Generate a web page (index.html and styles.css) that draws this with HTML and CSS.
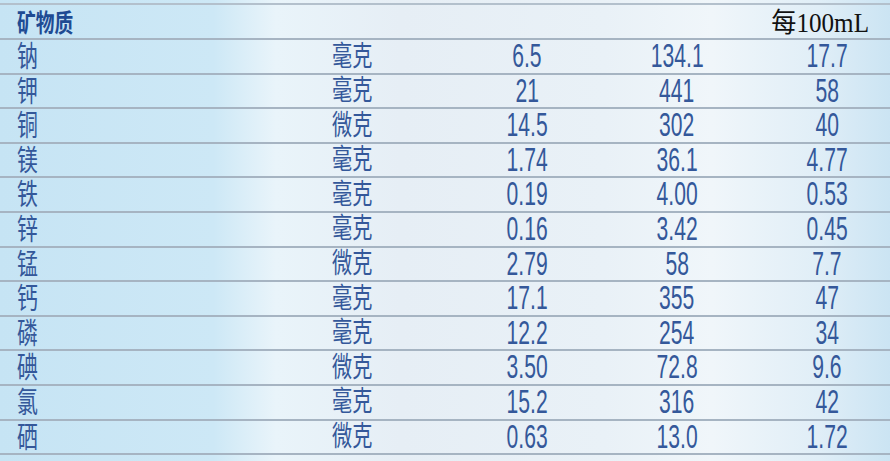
FILE: index.html
```html
<!DOCTYPE html>
<html lang="zh">
<head>
<meta charset="utf-8">
<title>矿物质</title>
<link rel="stylesheet" href="styles.css">
</head>
<body>
<div class="table">
  <div class="row head">
    <div class="name"><span class="title">矿物质</span></div>
    <div class="per"><span class="pertext">每100mL</span></div>
  </div>
  <div class="row"><div class="name"><span class="cn">钠</span></div><div class="unit"><span class="cu">毫克</span></div><div class="num"><span class="n">6.5</span></div><div class="num"><span class="n">134.1</span></div><div class="num last"><span class="n">17.7</span></div></div>
  <div class="row"><div class="name"><span class="cn">钾</span></div><div class="unit"><span class="cu">毫克</span></div><div class="num"><span class="n">21</span></div><div class="num"><span class="n">441</span></div><div class="num last"><span class="n">58</span></div></div>
  <div class="row"><div class="name"><span class="cn">铜</span></div><div class="unit"><span class="cu">微克</span></div><div class="num"><span class="n">14.5</span></div><div class="num"><span class="n">302</span></div><div class="num last"><span class="n">40</span></div></div>
  <div class="row"><div class="name"><span class="cn">镁</span></div><div class="unit"><span class="cu">毫克</span></div><div class="num"><span class="n">1.74</span></div><div class="num"><span class="n">36.1</span></div><div class="num last"><span class="n">4.77</span></div></div>
  <div class="row"><div class="name"><span class="cn">铁</span></div><div class="unit"><span class="cu">毫克</span></div><div class="num"><span class="n">0.19</span></div><div class="num"><span class="n">4.00</span></div><div class="num last"><span class="n">0.53</span></div></div>
  <div class="row"><div class="name"><span class="cn">锌</span></div><div class="unit"><span class="cu">毫克</span></div><div class="num"><span class="n">0.16</span></div><div class="num"><span class="n">3.42</span></div><div class="num last"><span class="n">0.45</span></div></div>
  <div class="row"><div class="name"><span class="cn">锰</span></div><div class="unit"><span class="cu">微克</span></div><div class="num"><span class="n">2.79</span></div><div class="num"><span class="n">58</span></div><div class="num last"><span class="n">7.7</span></div></div>
  <div class="row"><div class="name"><span class="cn">钙</span></div><div class="unit"><span class="cu">毫克</span></div><div class="num"><span class="n">17.1</span></div><div class="num"><span class="n">355</span></div><div class="num last"><span class="n">47</span></div></div>
  <div class="row"><div class="name"><span class="cn">磷</span></div><div class="unit"><span class="cu">毫克</span></div><div class="num"><span class="n">12.2</span></div><div class="num"><span class="n">254</span></div><div class="num last"><span class="n">34</span></div></div>
  <div class="row"><div class="name"><span class="cn">碘</span></div><div class="unit"><span class="cu">微克</span></div><div class="num"><span class="n">3.50</span></div><div class="num"><span class="n">72.8</span></div><div class="num last"><span class="n">9.6</span></div></div>
  <div class="row"><div class="name"><span class="cn">氯</span></div><div class="unit"><span class="cu">毫克</span></div><div class="num"><span class="n">15.2</span></div><div class="num"><span class="n">316</span></div><div class="num last"><span class="n">42</span></div></div>
  <div class="row"><div class="name"><span class="cn">硒</span></div><div class="unit"><span class="cu">微克</span></div><div class="num"><span class="n">0.63</span></div><div class="num"><span class="n">13.0</span></div><div class="num last"><span class="n">1.72</span></div></div>
  <div class="row tail"><div class="name"><span class="title tailtext">其他营养成分</span></div></div>
</div>
</body>
</html>
```
FILE: styles.css
```css
html, body {
  margin: 0;
  padding: 0;
  overflow: hidden;
}
body {
  width: 890px;
  height: 461px;
  background: linear-gradient(to right, #c6e4f4 0%, #cde8f6 24%, #e9f4fa 31%, #e6eef5 45%, #e9f1f7 68%, #f0f6fa 80%, #e0eef7 92%, #cbe4f3 100%);
  font-family: "Liberation Sans", Arial, "Noto Sans CJK SC", sans-serif;
  color: #34589a;
}
.table {
  padding-top: 3px;
}
.row {
  display: grid;
  grid-template-columns: 332px 120px 150px 150px 138px;
  box-sizing: border-box;
  height: 34.6px;
  border-bottom: 2px solid #a6b4c2;
  align-items: center;
}
.row.head {
  height: 37px;
  border-top: 2px solid #b3c0cc;
  grid-template-columns: 332px 558px;
}
.row.tail {
  border-bottom: none;
  padding-top: 10px;
}
.name {
  padding-left: 17px;
  white-space: nowrap;
}
.cn, .cu, .title {
  display: inline-block;
  font-family: "Noto Sans CJK SC", sans-serif;
  transform-origin: left center;
  line-height: 1;
}
.cn {
  font-size: 29px;
  transform: scaleX(0.72) translateY(-1px);
}
.cu {
  font-size: 28px;
  transform: scaleX(0.72) translateY(-2px);
}
.title {
  font-size: 25px;
  font-weight: 700;
  color: #1f4b93;
  transform: scaleX(0.75) translateY(1px);
}
.tailtext {
  padding-left: 30px;
}
.num {
  text-align: center;
}
.num.last {
  padding-left: 12px;
}
.n {
  display: inline-block;
  font-size: 33px;
  line-height: 1;
  transform: scaleX(0.64) translateY(-1px);
  transform-origin: center center;
}
.per {
  text-align: right;
  padding-right: 21px;
  align-self: end;
}
.pertext {
  display: inline-block;
  font-family: "Liberation Serif", "Noto Sans CJK SC", serif;
  font-size: 27px;
  line-height: 1;
  color: #111;
  transform: scaleX(0.93) translateY(-1px);
  transform-origin: right bottom;
}
```
